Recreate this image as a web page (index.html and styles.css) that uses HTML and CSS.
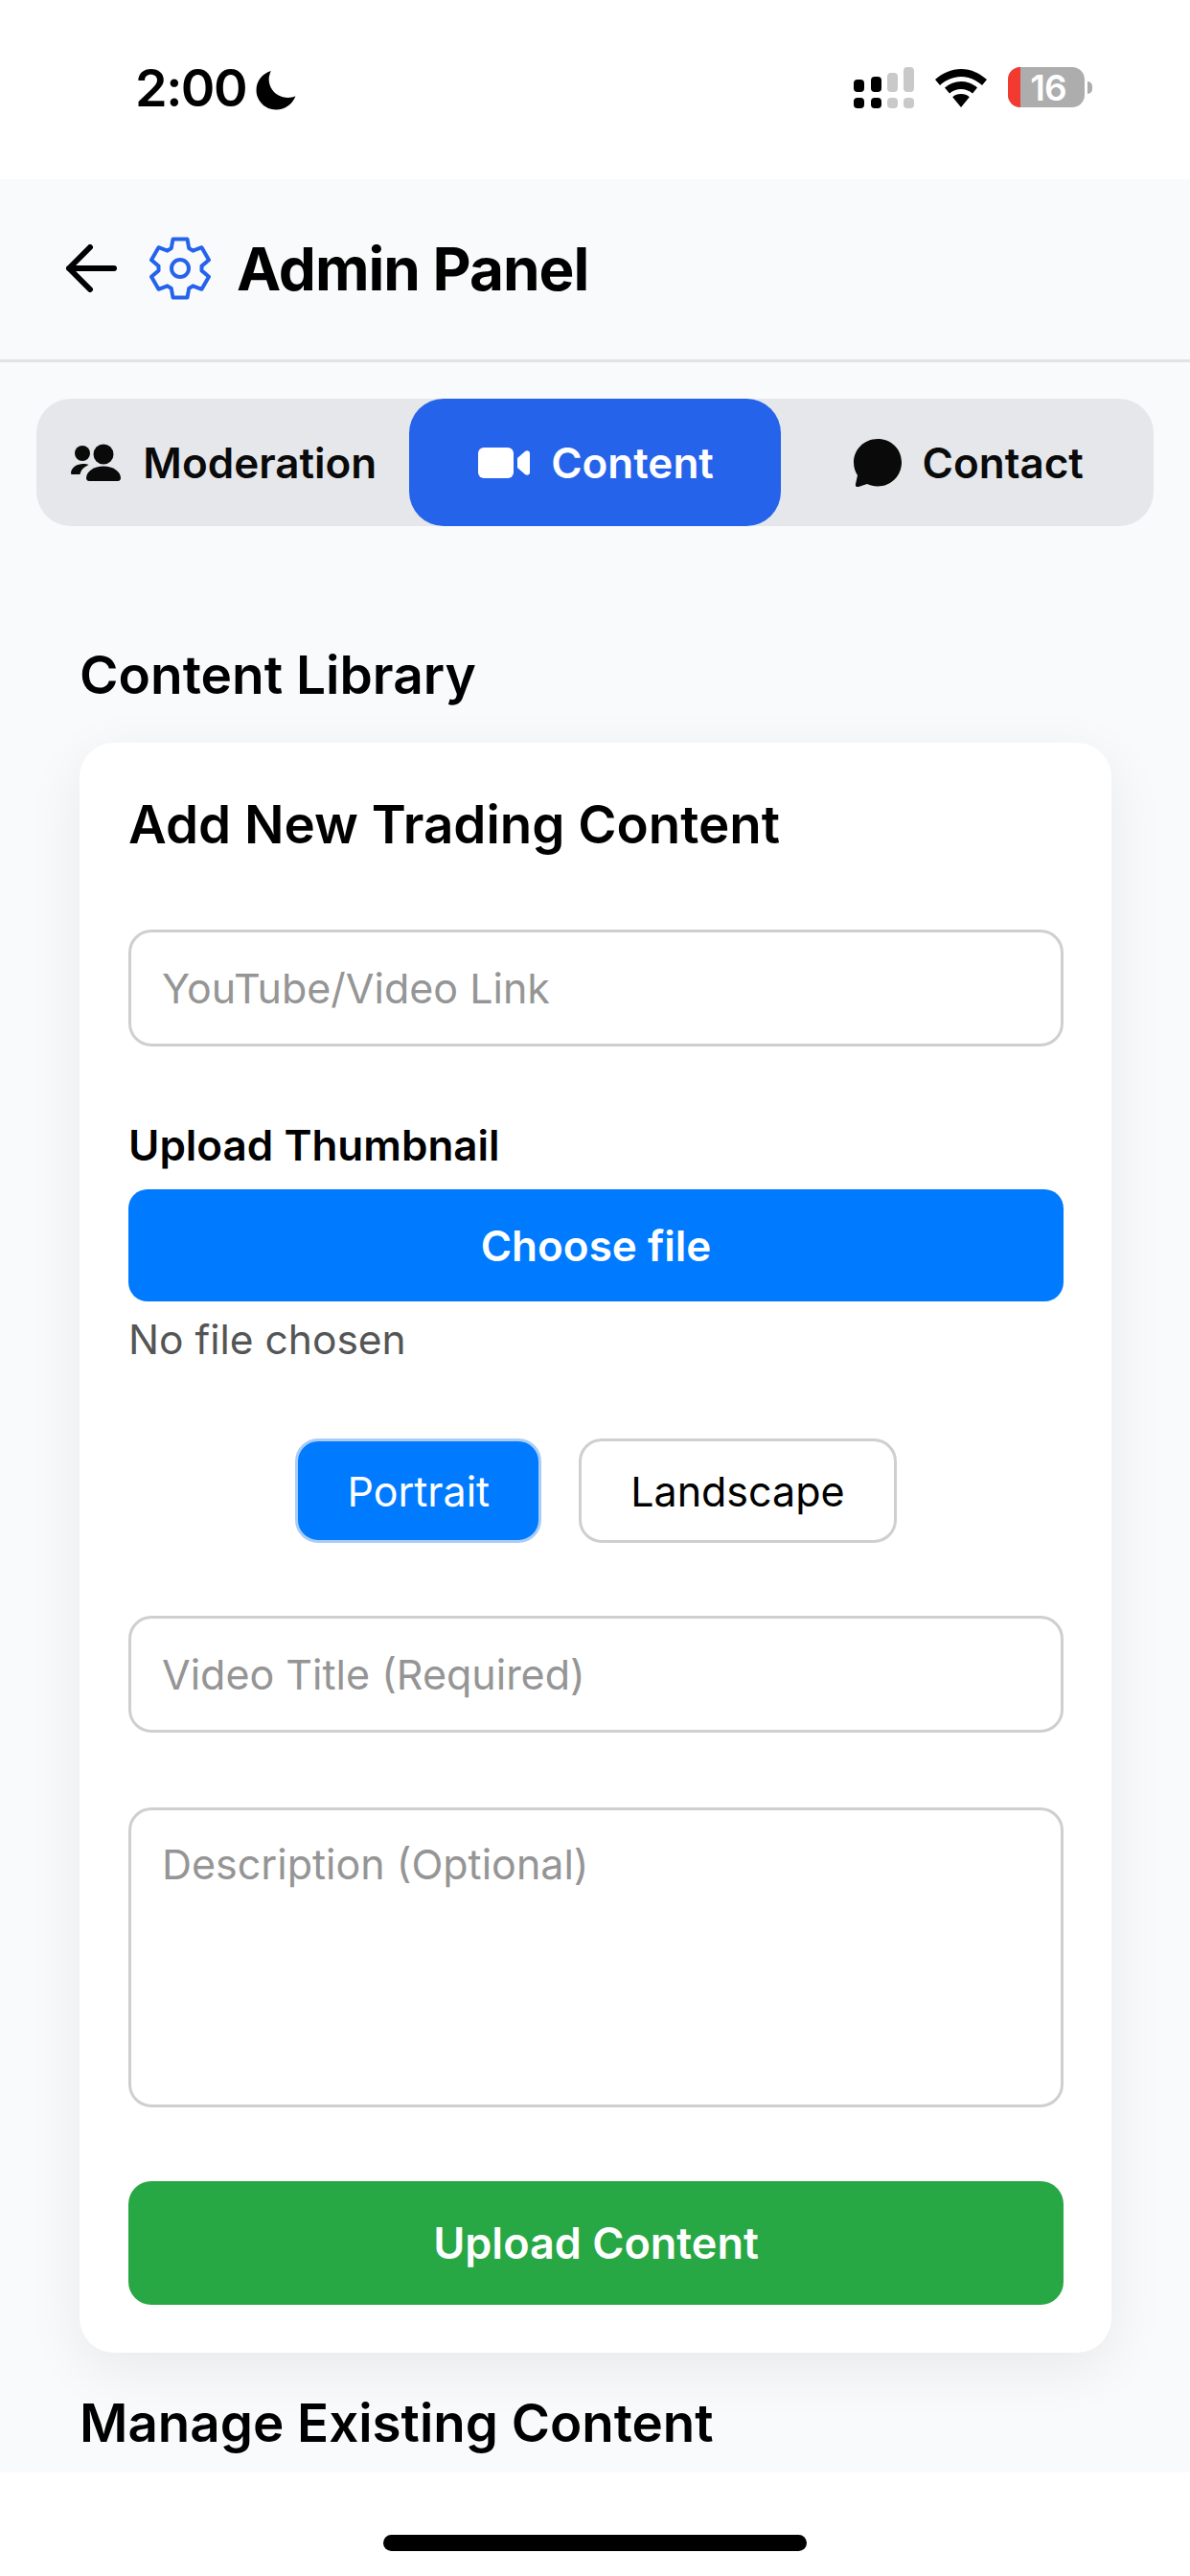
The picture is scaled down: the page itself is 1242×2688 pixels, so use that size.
FILE: index.html
```html
<!DOCTYPE html>
<html lang="en">
<head>
  <meta charset="UTF-8" />
  <title>Admin Panel</title>
  <link rel="stylesheet" href="styles.css">
</head>
<body>

<div class="status-bar">
  <div class="status-left">
    <span class="time">2:00</span>
    <svg class="moon" viewBox="0 0 40 40"><path d="M15 1C6.500 3.500 0.500 11 0.500 20c0 11 9 19.500 19.500 19.500 9 0 16.500-5.500 19.500-13.500-2 1-5 1.600-7.500 1.600-11 0-19-8.500-19-18.500 0-2.600 1-5.800 2-8.100z"/></svg>
  </div>
  <div class="status-right">
    <svg class="signal" viewBox="0 0 63 43">
      <rect x="0" y="13" width="11" height="13" rx="4"/>
      <rect x="0" y="32" width="11" height="11" rx="4"/>
      <rect x="18" y="10" width="11" height="16" rx="4"/>
      <rect x="18" y="32" width="11" height="11" rx="4"/>
      <rect class="off" x="35" y="6" width="11" height="20" rx="4"/>
      <rect class="off" x="35" y="32" width="11" height="11" rx="4"/>
      <rect class="off" x="52" y="0" width="11" height="26" rx="4"/>
      <rect class="off" x="52" y="32" width="11" height="11" rx="4"/>
    </svg>
    <svg class="wifi" viewBox="0 0 54 40">
      <path d="M27 0C17 0 8 4 0 11l5 6c6-5.500 14-9 22-9s16 3.500 22 9l5-6C46 4 37 0 27 0z"/>
      <path d="M27 13c-6.500 0-12 2.300-17 6.500l5 6c3.400-2.800 7.500-4.500 12-4.500s8.600 1.700 12 4.500l5-6C39 15.300 33.500 13 27 13z"/>
      <path d="M27 26c-3.500 0-6.500 1.200-8.800 3.200L27 40l8.800-10.800C33.500 27.200 30.500 26 27 26z"/>
    </svg>
    <div class="battery">
      <div class="battery-body">
        <span class="battery-low"></span>
        <span class="battery-num">16</span>
      </div>
      <span class="battery-nub"></span>
    </div>
  </div>
</div>

<div class="page">
  <header class="top-bar">
    <svg class="back-icon" viewBox="0 0 54 50"><path d="M51 25H4M26 3L4 25l22 22"/></svg>
    <svg class="gear-icon" viewBox="-36 -36 72 72">
      <path d="M-7.500-30.500H7.500L9.200-21 13.300-18.300 22.500-21.800 30-8.700 22.500-2.400V2.400L30 8.700 22.500 21.800 13.300 18.300 9.200 21 7.500 30.500H-7.500L-9.200 21-13.300 18.300-22.500 21.800-30 8.700-22.500 2.400V-2.400L-30-8.700-22.500-21.800-13.300-18.300-9.200-21z"/>
      <circle r="9"/>
    </svg>
    <h1>Admin Panel</h1>
  </header>

  <nav class="tabs">
    <a class="tab">
      <svg class="tab-icon people" viewBox="0 0 54 40">
        <circle cx="13" cy="10" r="8"/>
        <circle cx="35" cy="11" r="10.500"/>
        <path d="M1 31c0-6 6-10 13-10 2 0 4 .3 5.500 1-5 2.500-8 5-9 10H3c-1.500 0-2-.5-2-1z"/>
        <path d="M17 36c0-7 8-12.500 18-12.500S53 29 53 36c0 1.500-1 3-3 3H20c-2 0-3-1.500-3-3z"/>
      </svg>
      Moderation
    </a>
    <a class="tab active">
      <svg class="tab-icon camera" viewBox="0 0 54 32">
        <rect x="0" y="0" width="37" height="32" rx="6"/>
        <path d="M41 11L49 4c2-1.500 5-.5 5 2v20c0 2.500-3 3.500-5 2L41 21z"/>
      </svg>
      Content
    </a>
    <a class="tab">
      <svg class="tab-icon bubble" viewBox="0 0 50 50"><path d="M25 0C11 0 0 11 0 24.500c0 5 1.500 9.500 4 13.500l-2 9c-.5 2.500 1 3.500 3 3l9-3c3.300 1.500 7 2.500 11 2.500 14 0 25-11 25-25S39 0 25 0z"/></svg>
      Contact
    </a>
  </nav>

  <main class="content">
    <h2 class="section-title">Content Library</h2>

    <section class="card">
      <h3>Add New Trading Content</h3>
      <input class="field link-field" type="text" placeholder="YouTube/Video Link">

      <label class="upload-label">Upload Thumbnail</label>
      <button class="btn choose-btn">Choose file</button>
      <div class="file-name">No file chosen</div>

      <div class="orientation">
        <button class="orient-btn selected">Portrait</button>
        <button class="orient-btn">Landscape</button>
      </div>

      <input class="field title-field" type="text" placeholder="Video Title (Required)">
      <textarea class="field desc-field" placeholder="Description (Optional)"></textarea>

      <button class="btn upload-btn">Upload Content</button>
    </section>

    <h2 class="section-title manage-title">Manage Existing Content</h2>
  </main>
</div>

<div class="home-area">
  <div class="home-indicator"></div>
</div>

</body>
</html>
```

FILE: styles.css
```css
* {
  box-sizing: border-box;
  margin: 0;
  padding: 0;
  font-family: Inter, "Liberation Sans", sans-serif;
}

body {
  width: 1242px;
  height: 2688px;
  display: flex;
  flex-direction: column;
  background: #fff;
  color: #000;
  overflow: hidden;
}

.status-bar {
  height: 187px;
  flex-shrink: 0;
  display: flex;
  justify-content: space-between;
  padding: 70px 102px 0 141px;
}

.status-left {
  display: flex;
  align-items: flex-start;
  gap: 10px;
}

.time {
  font-size: 54px;
  font-weight: 600;
  letter-spacing: -1.5px;
  line-height: 44px;
}

.moon {
  width: 42px;
  height: 42px;
  margin-top: 3px;
}

.status-right {
  display: flex;
  align-items: flex-start;
  gap: 22px;
}

.signal {
  width: 63px;
  height: 43px;
}

.signal .off {
  fill: #c9c9c9;
}

.wifi {
  width: 54px;
  height: 40px;
  margin-top: 2px;
}

.battery {
  display: flex;
  align-items: center;
  gap: 3px;
}

.battery-body {
  position: relative;
  width: 80px;
  height: 42px;
  background: #adadad;
  border-radius: 13px;
  overflow: hidden;
  display: flex;
  justify-content: center;
  align-items: center;
}

.battery-low {
  position: absolute;
  left: 0;
  top: 0;
  bottom: 0;
  width: 13px;
  background: #f23a30;
}

.battery-num {
  color: #fff;
  font-size: 37px;
  font-weight: 600;
  letter-spacing: -1px;
  margin-left: 4px;
}

.battery-nub {
  width: 5px;
  height: 13px;
  background: #adadad;
  border-radius: 0 6px 6px 0;
}

.page {
  height: 2393px;
  flex-shrink: 0;
  background: #f9fafb;
  overflow: hidden;
}

.top-bar {
  height: 191px;
  display: flex;
  align-items: center;
  padding: 0 0 2px 68px;
  border-bottom: 3px solid #e2e3e5;
}

.back-icon {
  width: 54px;
  height: 50px;
  fill: none;
  stroke: #000;
  stroke-width: 6;
  stroke-linecap: round;
  stroke-linejoin: round;
}

.gear-icon {
  width: 72px;
  height: 72px;
  margin-left: 30px;
  fill: none;
  stroke: #2563eb;
  stroke-width: 4;
  stroke-linejoin: round;
}

.top-bar h1 {
  font-size: 62px;
  font-weight: 700;
  letter-spacing: -1px;
  margin-left: 23px;
}

.tabs {
  height: 133px;
  margin: 38px 38px 0;
  display: grid;
  grid-template-columns: 1fr 1fr 1fr;
  background: #e5e7eb;
  border-radius: 36px;
}

.tab {
  display: flex;
  justify-content: center;
  align-items: center;
  gap: 22px;
  padding-left: 2px;
  border-radius: 36px;
  font-size: 44px;
  font-weight: 600;
  color: #0a0a0a;
}

.tab.active {
  background: #2563eb;
  color: #fff;
}

.tab-icon {
  fill: currentColor;
}

.people {
  width: 54px;
  height: 40px;
}

.camera {
  width: 54px;
  height: 32px;
}

.bubble {
  width: 50px;
  height: 50px;
}

.content {
  padding: 0 82px 0 83px;
}

.section-title {
  font-size: 55px;
  font-weight: 600;
  line-height: 66px;
  margin-top: 122px;
}

.card {
  margin-top: 38px;
  padding: 52px 50px 50px 51px;
  background: #fff;
  border-radius: 36px;
  box-shadow: 0 16px 60px rgba(0, 0, 0, 0.07);
}

.card h3 {
  font-size: 54.700px;
  font-weight: 600;
  line-height: 66px;
}

.field {
  display: block;
  width: 100%;
  background: #fff;
  border: 3px solid #cfcfcf;
  border-radius: 24px;
  padding: 0 32px;
  font-size: 43px;
  color: #333;
  outline: none;
  resize: none;
}

.field::placeholder {
  color: #959595;
  opacity: 1;
}

.link-field {
  height: 122px;
  margin-top: 77px;
}

.upload-label {
  display: block;
  font-size: 44px;
  font-weight: 600;
  line-height: 52px;
  margin-top: 77px;
}

.btn {
  display: block;
  width: 100%;
  border: none;
  color: #fff;
  font-size: 44px;
  font-weight: 600;
}

.choose-btn {
  height: 117px;
  margin-top: 20px;
  background: #007bff;
  border-radius: 20px;
}

.file-name {
  font-size: 42.500px;
  line-height: 52px;
  color: #555;
  margin-top: 14px;
}

.orientation {
  display: flex;
  justify-content: center;
  gap: 39px;
  margin-top: 77px;
}

.orient-btn {
  height: 109px;
  padding: 0 51px;
  background: #fff;
  border: 3px solid #cfcfcf;
  border-radius: 24px;
  font-size: 43px;
  color: #000;
}

.orient-btn.selected {
  background: #007bff;
  border-color: #a9cdf5;
  color: #fff;
}

.title-field {
  height: 122px;
  margin-top: 76px;
}

.desc-field {
  height: 313px;
  margin-top: 78px;
  padding-top: 33px;
  line-height: 46px;
}

.upload-btn {
  height: 129px;
  margin-top: 77px;
  background: #28a745;
  border-radius: 24px;
  font-size: 45px;
}

.manage-title {
  margin-top: 40px;
  font-size: 54.700px;
}

.home-area {
  flex: 1;
  display: flex;
  justify-content: center;
  padding-top: 65px;
}

.home-indicator {
  width: 442px;
  height: 17px;
  background: #000;
  border-radius: 9px;
}
```
